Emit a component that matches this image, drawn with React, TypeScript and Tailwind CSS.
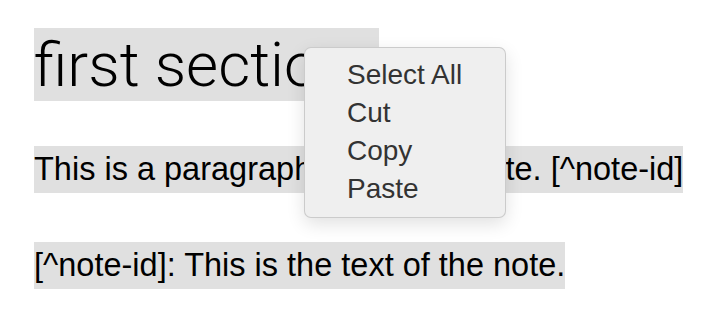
import React from "react";

const items = ["Select All", "Cut", "Copy", "Paste"];

const App: React.FC = () => {
  return (
    <div className="relative w-[716px] h-[322px] overflow-hidden bg-white text-black">
      <div className="flex flex-col items-start pl-[34px] pt-[28px]">
        <h1 className="bg-[#e0e0e0] pr-[26px] font-['Roboto',sans-serif] font-light text-[62px] leading-[73px]">
          first section
        </h1>
        <p className="mt-[45px] bg-[#e0e0e0] font-['Liberation_Sans',Arial,sans-serif] text-[32.5px] leading-[47px]">
          This is a paragraph with a footnote. [^note-id]
        </p>
        <p className="mt-[49px] bg-[#e0e0e0] font-['Liberation_Sans',Arial,sans-serif] text-[32.5px] leading-[47px]">
          [^note-id]: This is the text of the note.
        </p>
      </div>

      <div className="absolute left-[304px] top-[47px] w-[202px] rounded-[7px] border border-black/15 bg-[#efefef] pt-[8px] pb-[9px] pl-[42px] shadow-[0_6px_18px_rgba(0,0,0,0.12)]">
        {items.map((item) => (
          <div
            key={item}
            className="font-['Liberation_Sans',Arial,sans-serif] text-[28px] leading-[38px] text-[#333333]"
          >
            {item}
          </div>
        ))}
      </div>
    </div>
  );
};

export default App;
